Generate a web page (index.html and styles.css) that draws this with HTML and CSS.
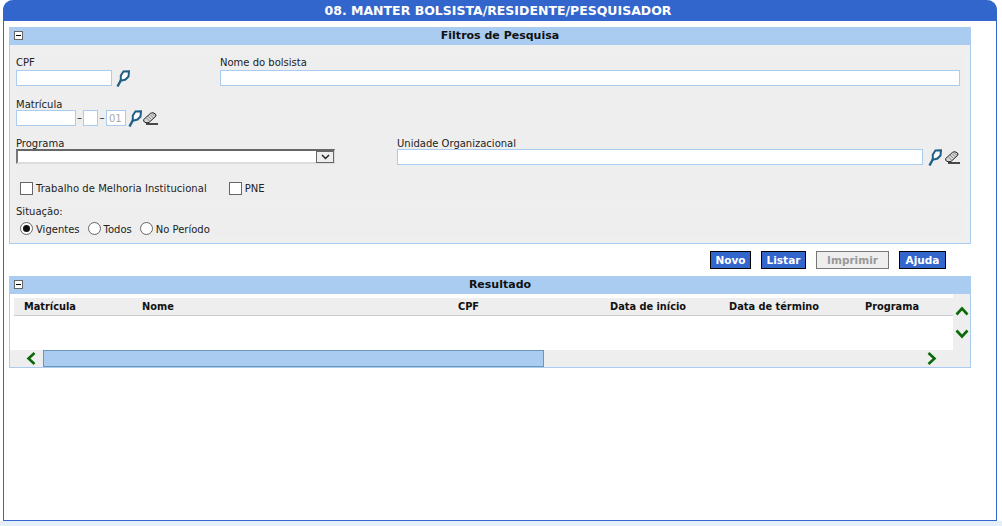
FILE: index.html
```html
<!DOCTYPE html>
<html lang="pt">
<head>
<meta charset="utf-8">
<title>Manter Bolsista</title>
<link rel="stylesheet" href="styles.css">
</head>
<body>
<svg class="defs" width="0" height="0" aria-hidden="true">
  <symbol id="lupa" viewBox="0 0 14 17">
    <path d="M1.500 16.500 5 10" fill="none" stroke="#1f5f85" stroke-width="2.400"/>
    <path d="M4.800 10 4.800 5.500 7.500 1.500 13 1.300 12.500 6.500 9.500 9.500 6 10.500Z" fill="#fff" stroke="#1f5f85" stroke-width="2"/>
  </symbol>
  <symbol id="borracha" viewBox="0 0 15 13">
    <path d="M.7 7.500 7.500 1.300 10 .7 12.500 2 13 4 6 10.500 3 10.800 .8 9.500Z" fill="#d8d8d8" stroke="#222" stroke-width="1"/>
    <path d="M3 5.500 6.500 9M5 4 8.500 7.500M7 2.500 10.500 6M9 1.500 12 4.500" stroke="#888" stroke-width="1"/>
    <path d="M3 12H15" stroke="#000" stroke-width="1.400"/>
  </symbol>
</svg>
<div class="frame">
  <h1 class="title">08. MANTER BOLSISTA/RESIDENTE/PESQUISADOR</h1>
  <section class="panel">
    <header class="panel-head"><span class="toggle"></span><h2>Filtros de Pesquisa</h2></header>
    <div class="panel-body">
      <div class="row row-a">
        <div class="field f-cpf">
          <label>CPF</label>
          <div class="line"><input class="txt w-cpf" type="text"><svg class="ic-lupa ic-gap"><use href="#lupa"/></svg></div>
        </div>
        <div class="field f-nome">
          <label>Nome do bolsista</label>
          <div class="line"><input class="txt w-nome" type="text"></div>
        </div>
      </div>
      <div class="row row-b">
        <div class="field">
          <label>Matrícula</label>
          <div class="line">
            <input class="txt w-mat" type="text"><span class="dash">–</span>
            <input class="txt w-dv" type="text"><span class="dash d2">–</span>
            <input class="txt w-seq" type="text" value="01" disabled>
            <svg class="ic-lupa"><use href="#lupa"/></svg>
            <svg class="ic-bor ic-gap4"><use href="#borracha"/></svg>
          </div>
        </div>
      </div>
      <div class="row row-c">
        <div class="field f-prog">
          <label>Programa</label>
          <div class="select"><span class="arrow"><svg width="9" height="6" viewBox="0 0 9 6"><path d="M1 1 4.500 4.500 8 1" fill="none" stroke="#222" stroke-width="1.500"/></svg></span></div>
        </div>
        <div class="field f-uni">
          <label>Unidade Organizacional</label>
          <div class="line"><input class="txt w-uni" type="text"><svg class="ic-lupa ic-gap2"><use href="#lupa"/></svg><svg class="ic-bor ic-gap3"><use href="#borracha"/></svg></div>
        </div>
      </div>
      <div class="row row-d">
        <label class="check c1"><input type="checkbox">Trabalho de Melhoria Institucional</label>
        <label class="check c2"><input type="checkbox">PNE</label>
      </div>
      <div class="row row-e">
        <div class="sit-label">Situação:</div>
        <div class="radios">
          <label class="radio"><input type="radio" name="s" checked>Vigentes</label>
          <label class="radio"><input type="radio" name="s">Todos</label>
          <label class="radio"><input type="radio" name="s">No Período</label>
        </div>
      </div>
    </div>
  </section>
  <div class="actions">
    <button class="btn b-novo">Novo</button>
    <button class="btn b-listar">Listar</button>
    <button class="btn b-imp" disabled>Imprimir</button>
    <button class="btn b-ajuda">Ajuda</button>
  </div>
  <section class="panel result">
    <header class="panel-head"><span class="toggle"></span><h2>Resultado</h2></header>
    <div class="result-body">
      <div class="grid-wrap">
        <div class="grid-main">
          <div class="cols">
            <span>Matrícula</span><span>Nome</span><span>CPF</span><span>Data de início</span><span>Data de término</span><span>Programa</span>
          </div>
          <div class="empty"></div>
        </div>
        <div class="vscroll">
          <svg width="14" height="10" viewBox="0 0 14 10"><path d="M1.500 8.500 7 2.500 12.500 8.500" fill="none" stroke="#0a6a0a" stroke-width="2.600"/></svg>
          <svg width="14" height="10" viewBox="0 0 14 10"><path d="M1.500 1.500 7 7.500 12.500 1.500" fill="none" stroke="#0a6a0a" stroke-width="2.600"/></svg>
        </div>
      </div>
      <div class="hscroll">
        <span class="arr-l"><svg width="10" height="13" viewBox="0 0 10 13"><path d="M8.500 1 2.500 6.500 8.500 12" fill="none" stroke="#0a6a0a" stroke-width="2.600"/></svg></span>
        <span class="thumb"></span>
        <span class="arr-r"><svg width="10" height="13" viewBox="0 0 10 13"><path d="M1.500 1 7.500 6.500 1.500 12" fill="none" stroke="#0a6a0a" stroke-width="2.600"/></svg></span>
      </div>
    </div>
  </section>
</div>
<div class="footer"></div>
</body>
</html>
```
FILE: styles.css
```css
* { box-sizing: border-box; }
html, body { margin: 0; padding: 0; background: #fff; height: 526px; overflow: hidden; }
body { font-family: "DejaVu Sans", Verdana, sans-serif; font-size: 10px; color: #222; padding: 0 4px 0 3px; }
.defs { display: block; height: 0; }
.frame { width: 994px; height: 521px; border: 1px solid #3366cc; border-top: 0; border-radius: 10px 10px 0 0; margin: 0 1px 0 0; }
.title { margin: 0 -1px; height: 21px; padding-right: 4px; background: #3366cc; color: #fff; font-size: 12.500px; line-height: 21px; text-align: center; border-radius: 10px 10px 0 0; font-weight: bold; }
.panel { width: 962px; margin: 6px 0 0 5px; border: 1px solid #a9ccf0; border-top: 0; background: #efefef; }
.panel-head { height: 18px; margin: 0 -1px; background: #a9ccf0; display: flex; align-items: center; position: relative; }
.panel-head h2 { flex: 1; margin: 0; padding-left: 20px; font-size: 11px; font-weight: bold; text-align: center; color: #111; line-height: 18px; }
.toggle { width: 9px; height: 9px; border: 1px solid #666; background: #fff; position: absolute; left: 5px; top: 4px; }
.toggle::after { content: ""; position: absolute; left: 1px; right: 1px; top: 3px; height: 1px; background: #000; }
.panel-body { padding: 0 6px; height: 198px; display: flex; flex-direction: column; }
.row { background: #eee; }
.row-a { display: flex; height: 42px; margin-top: 10px; }
.row-b { height: 39px; margin-top: 1px; }
.row-c { display: flex; height: 38px; }
.row-d { display: flex; height: 26px; align-items: center; }
.row-e { margin-top: 4px; }
.field label { display: block; line-height: 12px; height: 12px; padding-top: 1px; color: #222; }
.row-a .field label { padding-top: 2px; height: 15px; }
.f-cpf { width: 204px; }
.line { display: flex; align-items: center; height: 16px; }
.txt { height: 16px; border: 1px solid #a9ccf0; background: #fff; padding: 0 2px; font: inherit; color: #aaa; outline: 0; margin: 0; }
.w-cpf { width: 96px; }
.w-nome { width: 740px; }
.w-mat { width: 60px; }
.w-dv { width: 15px; }
.w-seq { width: 20px; }
.w-uni { width: 526px; }
.dash { width: 7px; text-align: center; line-height: 16px; }
.d2 { width: 8px; }
.ic-lupa { width: 14px; height: 17px; margin-left: 2px; margin-top: 1px; flex: none; }
.ic-gap { margin-left: 4px; }
.ic-gap2 { margin-left: 5px; }
.ic-bor { width: 15px; height: 13px; margin-left: 2px; flex: none; }
.ic-gap3 { margin-left: 3px; }
.ic-gap4 { margin-left: 1px; }
.f-prog { width: 381px; }
.select { width: 319px; height: 15px; background: #fff; border-top: 2px solid #666; border-left: 2px solid #777; border-right: 1px solid #ddd; border-bottom: 2px solid #ddd; position: relative; }
.arrow { position: absolute; right: 0; top: 0; width: 18px; height: 12px; background: #eee; border: 1px solid #666; display: flex; align-items: center; justify-content: center; }
.check { display: flex; align-items: center; line-height: 13px; }
.check input, .radio input { appearance: none; -webkit-appearance: none; margin: 0; flex: none; background: #fff; }
.check input { width: 13px; height: 13px; border: 1px solid #666; margin-right: 3px; }
.c1 { margin-left: 4px; letter-spacing: .06px; }
.c2 { margin-left: 22px; }
.sit-label { line-height: 13px; height: 17px; }
.radios { display: flex; margin-left: 4px; }
.radio { display: flex; align-items: flex-start; line-height: 15px; margin-right: 8px; }
.radio input { width: 13px; height: 13px; border: 1px solid #666; border-radius: 50%; margin-right: 3px; position: relative; }
.radio input:checked::after { content: ""; position: absolute; left: 2px; top: 2px; width: 7px; height: 7px; border-radius: 50%; background: #111; }
.actions { display: flex; gap: 10px; justify-content: flex-end; margin: 7px 50px 0 0; height: 18px; }
.btn { height: 18px; padding: 0; border: 1px solid #000; background: #3366cc; color: #fff; font: bold 10.500px "DejaVu Sans", Verdana, sans-serif; margin: 0; }
.b-novo { width: 41px; }
.b-listar { width: 45px; }
.b-imp { width: 73px; background: #eee; color: #999; border-color: #777; }
.b-ajuda { width: 47px; }
.result { margin-top: 7px; background: #fff; }
.result-body { height: 73px; display: flex; flex-direction: column; }
.grid-wrap { display: flex; height: 56px; }
.grid-main { flex: 1; padding: 4px 0 0 4px; background: #fff; }
.cols { height: 18px; background: #eee; border-bottom: 1px solid #ccc; display: grid; grid-template-columns: 118px 316px 152px 119px 136px 1fr; padding-left: 10px; font-weight: bold; color: #111; line-height: 17px; font-size: 9.800px; }
.vscroll { width: 17px; background: #eee; display: flex; flex-direction: column; align-items: center; gap: 13px; padding-top: 12px; }
.hscroll { height: 17px; background: #eee; display: flex; align-items: center; }
.arr-l { width: 33px; display: flex; justify-content: center; padding-left: 8px; }
.arr-r { margin-left: 383px; display: flex; }
.thumb { width: 501px; height: 17px; background: #a9ccf0; border: 1px solid #6a97b8; }
.footer { height: 5px; margin: 0 -4px 0 -3px; background: #e4effa; }
```
